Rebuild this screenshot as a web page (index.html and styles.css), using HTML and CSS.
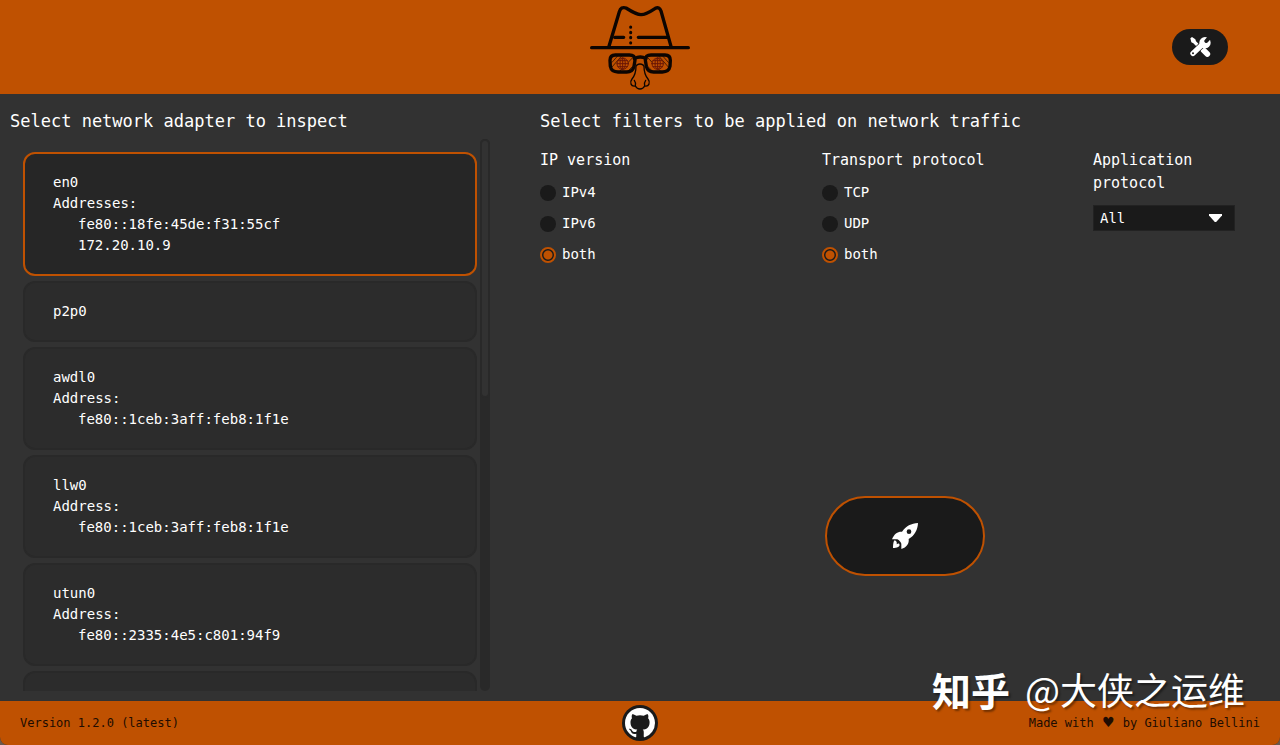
FILE: index.html
```
<!DOCTYPE html>
<html lang="en">
<head>
    <meta charset="UTF-8">
    <meta name="viewport" content="width=device-width, initial-scale=1.0">
    <title>Network traffic</title>
    <link rel="stylesheet" href="styles.css">
</head>
<body>

<header class="header">
    <svg class="logo" viewBox="30 18 300 255" fill="none" stroke="#0c0502" stroke-linecap="round" stroke-linejoin="round" aria-hidden="true">
        <!-- hat -->
        <g stroke-width="10">
            <path d="M35 146H325"/>
            <path d="M87 142L118 38Q123 22 138 27C160 41 172 47 183 47C195 47 208 40 226 28Q238 22 243 36L273 142"/>
            <path d="M104 115H131M175 115H260"/>
            <path stroke-width="9" d="M152 84v1M152 100v1M152 115v1M152 131v1"/>
        </g>
        <!-- nose -->
        <path stroke-width="4" d="M168 202C168 224 163 232 156 240C148 250 153 264 166 261Q171 270 180 270Q189 270 194 261C207 264 212 250 204 240C197 232 192 224 192 202Q189 195 180 195Q171 195 168 202M163 244Q168 250 166 261M197 244Q192 250 194 261"/>
        <!-- glasses -->
        <g id="lens">
            <path stroke-width="2" d="M96 190L112 172M96 204L124 172M120 216L158 176M144 216L162 198"/>
            <g stroke="#6b1705" stroke-width="3">
                <circle cx="128" cy="194" r="17" fill="#bf5101"/>
                <ellipse cx="128" cy="194" rx="8" ry="17"/>
                <path d="M111 194H145M114 185H142M114 203H142M128 177V211"/>
            </g>
            <path stroke-width="10" d="M106 168H148Q166 168 165 184L162 202Q158 219 140 219H114Q94 219 91 202L90 184Q90 168 106 168Z"/>
        </g>
        <use href="#lens" transform="translate(361 0) scale(-1 1)"/>
        <path stroke-width="10" d="M163 179Q181 169 198 179"/>
    </svg>
    <button class="settings-btn" type="button" aria-label="Settings">
        <svg viewBox="0 0 64 60" width="22" height="20" fill="none" stroke-linecap="round" aria-hidden="true">
            <path d="M3 4L8 0L18 7L20 13L38 31L31 38L12 19L6 16Z" fill="#fff"/>
            <path d="M42 39L54 51" stroke="#fff" stroke-width="17"/>
            <path d="M14 46L42 20" stroke="#1a1a1a" stroke-width="20" stroke-linecap="butt"/>
            <path d="M11 49L42 20" stroke="#fff" stroke-width="16"/>
            <circle cx="47" cy="17" r="17" fill="#fff"/>
            <path d="M51 12L62 0" stroke="#1a1a1a" stroke-width="12"/>
            <circle cx="11" cy="49" r="3" fill="#1a1a1a"/>
        </svg>
    </button>
</header>

<main class="main">
    <section class="adapters">
        <h2>Select network adapter to inspect</h2>
        <div class="scroll-area">
            <div class="adapter-list">
                <button type="button" class="adapter selected">
                    <span>en0</span>
                    <span>Addresses:</span>
                    <span class="address">fe80::18fe:45de:f31:55cf</span>
                    <span class="address">172.20.10.9</span>
                </button>
                <button type="button" class="adapter">
                    <span>p2p0</span>
                </button>
                <button type="button" class="adapter">
                    <span>awdl0</span>
                    <span>Address:</span>
                    <span class="address">fe80::1ceb:3aff:feb8:1f1e</span>
                </button>
                <button type="button" class="adapter">
                    <span>llw0</span>
                    <span>Address:</span>
                    <span class="address">fe80::1ceb:3aff:feb8:1f1e</span>
                </button>
                <button type="button" class="adapter">
                    <span>utun0</span>
                    <span>Address:</span>
                    <span class="address">fe80::2335:4e5:c801:94f9</span>
                </button>
                <button type="button" class="adapter" aria-label="Adapter"></button>
            </div>
            <div class="scroll-track"><div class="scroll-thumb"></div></div>
        </div>
    </section>

    <section class="filters">
        <h2>Select filters to be applied on network traffic</h2>
        <div class="filter-row">
            <div class="filter" role="radiogroup" aria-labelledby="ip-title">
                <h3 id="ip-title">IP version</h3>
                <label><input type="radio" name="ip" value="4">IPv4</label>
                <label><input type="radio" name="ip" value="6">IPv6</label>
                <label><input type="radio" name="ip" value="both" checked>both</label>
            </div>
            <div class="filter" role="radiogroup" aria-labelledby="transport-title">
                <h3 id="transport-title">Transport protocol</h3>
                <label><input type="radio" name="transport" value="tcp">TCP</label>
                <label><input type="radio" name="transport" value="udp">UDP</label>
                <label><input type="radio" name="transport" value="both" checked>both</label>
            </div>
            <div class="filter app-filter">
                <h3><label for="app">Application protocol</label></h3>
                <div class="select-box">
                    <select id="app">
                        <option>All</option>
                    </select>
                </div>
            </div>
        </div>
        <button class="start-btn" type="button" aria-label="Start">
            <svg viewBox="0 0 78 78" width="26" height="26" aria-hidden="true">
                <path fill="#fff" d="M78 0C58 1 42 9 30 26C18 25 7 31 0 49L16 49C22 52 26 57 28 62L28 78C44 73 52 62 50 48C69 37 77 20 78 0Z"/>
                <path fill="#fff" d="M6 53C3 61 3 70 3 75C14 75 26 71 22 63C20 60 17 62 14 64C16 57 12 51 6 53Z"/>
                <circle cx="51" cy="26" r="7" fill="#1a1a1a"/>
            </svg>
        </button>
    </section>
</main>

<footer class="footer">
    <span>Version 1.2.0 (latest)</span>
    <a class="github" href="#" aria-label="GitHub">
        <svg viewBox="0 0 16 16" width="30" height="30" fill="#fff" aria-hidden="true">
            <path d="M8 0C3.58 0 0 3.58 0 8c0 3.54 2.29 6.53 5.47 7.59.4.07.55-.17.55-.38 0-.19-.01-.82-.01-1.49-2.01.37-2.53-.49-2.69-.94-.09-.23-.48-.94-.82-1.13-.28-.15-.68-.52-.01-.53.63-.01 1.08.58 1.23.82.72 1.21 1.87.87 2.33.66.07-.52.28-.87.51-1.07-1.78-.2-3.64-.89-3.64-3.95 0-.87.31-1.59.82-2.15-.08-.2-.36-1.02.08-2.12 0 0 .67-.21 2.2.82.64-.18 1.32-.27 2-.27s1.36.09 2 .27c1.53-1.04 2.2-.82 2.2-.82.44 1.1.16 1.92.08 2.12.51.56.82 1.27.82 2.15 0 3.07-1.87 3.75-3.65 3.95.29.25.54.73.54 1.48 0 1.07-.01 1.93-.01 2.2 0 .21.15.46.55.38A8.01 8.01 0 0 0 16 8c0-4.42-3.58-8-8-8z"/>
        </svg>
    </a>
    <span class="credits">Made with <span class="heart">♥</span> by Giuliano Bellini</span>
</footer>

<div class="watermark"><b>知乎</b><span>@大侠之运维</span></div>

</body>
</html>
```
FILE: styles.css
```
* {
    box-sizing: border-box;
}

html {
    background-color: #6b5a4e;
}

body {
    margin: 0;
    position: relative;
    display: flex;
    flex-direction: column;
    height: 100vh;
    overflow: hidden;
    border-radius: 0 0 8px 8px;
    background-color: #323232;
    color: #fff;
    font-family: 'DejaVu Sans Mono', 'Liberation Mono', monospace;
    font-size: 14px;
    line-height: 21px;
}

button, select {
    font: inherit;
    color: inherit;
    cursor: pointer;
}

h2, h3 {
    margin: 0;
    font-weight: normal;
}

h2 {
    font-size: 17px;
    line-height: 25px;
    white-space: nowrap;
}

h3 {
    font-size: 15px;
    line-height: 23px;
}

/* header */
.header {
    display: grid;
    grid-template-columns: 1fr auto 1fr;
    align-items: center;
    height: 94px;
    flex-shrink: 0;
    background-color: #bf5101;
}

.logo {
    grid-column: 2;
    width: 100px;
    height: 85px;
}

.settings-btn {
    display: flex;
    align-items: center;
    justify-content: center;
    justify-self: end;
    width: 56px;
    height: 36px;
    margin-right: 52px;
    padding: 0;
    border: none;
    border-radius: 18px;
    background-color: #1a1a1a;
}

/* main */
.main {
    display: grid;
    grid-template-columns: 48fr 73fr;
    gap: 50px;
    flex: 1;
    min-height: 0;
    padding: 15px 10px 10px;
}

.adapters, .filters {
    display: flex;
    flex-direction: column;
    min-width: 0;
    min-height: 0;
}

.adapters {
    gap: 5px;
}

.scroll-area {
    display: flex;
    gap: 3px;
    flex: 1;
    min-height: 0;
}

.adapter-list {
    display: flex;
    flex-direction: column;
    gap: 5px;
    flex: 1;
    padding: 13px 0 0 13px;
    overflow: hidden;
}

.adapter {
    display: flex;
    flex-direction: column;
    flex-shrink: 0;
    padding: 18px 28px;
    border: 2px solid #292929;
    border-radius: 12px;
    background-color: #2c2c2c;
    text-align: left;
}

.adapter.selected {
    border-color: #bf5101;
    background-color: #262626;
}

.address {
    padding-left: 25px;
}

.scroll-track {
    width: 10px;
    border-radius: 5px;
    background-color: #292929;
}

.scroll-thumb {
    height: 47%;
    border: 2px solid #292929;
    border-radius: 5px;
    background-color: #323232;
}

/* filters */
.filters {
    gap: 15px;
}

.filter-row {
    display: grid;
    grid-template-columns: 282fr 271fr 177fr;
}

.filter {
    display: flex;
    flex-direction: column;
    align-items: flex-start;
    gap: 10px;
}

.filter > label {
    display: flex;
    align-items: center;
    gap: 6px;
}

input[type="radio"] {
    appearance: none;
    width: 16px;
    height: 16px;
    margin: 0;
    border-radius: 50%;
    background-color: #1a1a1a;
}

input[type="radio"]:checked {
    border: 2px solid #bf5101;
    background: radial-gradient(circle, #bf5101 4px, #1a1a1a 5px);
}

.app-filter {
    width: 142px;
}

.select-box {
    position: relative;
    width: 100%;
}

.select-box::after {
    content: "";
    position: absolute;
    top: 9px;
    right: 13px;
    width: 13px;
    height: 8px;
    background-color: #fff;
    clip-path: polygon(0 0, 100% 0, 100% 20%, 55% 100%, 45% 100%, 0 20%);
    pointer-events: none;
}

select {
    appearance: none;
    display: block;
    width: 100%;
    height: 26px;
    padding: 0 6px;
    border: 1px solid #222;
    border-radius: 0;
    background-color: #1a1a1a;
}

.start-btn {
    display: flex;
    align-items: center;
    justify-content: center;
    align-self: center;
    width: 160px;
    height: 80px;
    margin-top: auto;
    margin-bottom: 115px;
    border: 2px solid #bf5101;
    border-radius: 40px;
    background-color: #1a1a1a;
}

/* footer */
.footer {
    display: grid;
    grid-template-columns: 1fr auto 1fr;
    align-items: center;
    height: 44px;
    flex-shrink: 0;
    padding: 0 20px;
    background-color: #bf5101;
    color: #200c02;
    font-size: 12px;
}

.credits {
    text-align: right;
}

.heart {
    padding: 0 1px;
    font-family: 'DejaVu Sans', sans-serif;
    font-size: 14px;
    line-height: 1;
}

.github {
    display: flex;
    align-items: center;
    justify-content: center;
    width: 36px;
    height: 36px;
    border-radius: 50%;
    background-color: #1a1a1a;
}

.watermark {
    position: absolute;
    right: 35px;
    bottom: 29px;
    display: flex;
    align-items: center;
    gap: 15px;
    font-family: 'Noto Sans CJK SC', sans-serif;
    font-size: 37px;
    line-height: 54px;
    text-shadow: 2px 2px 2px rgba(0, 0, 0, 0.4);
    pointer-events: none;
}

.watermark b {
    font-size: 39px;
}
```
